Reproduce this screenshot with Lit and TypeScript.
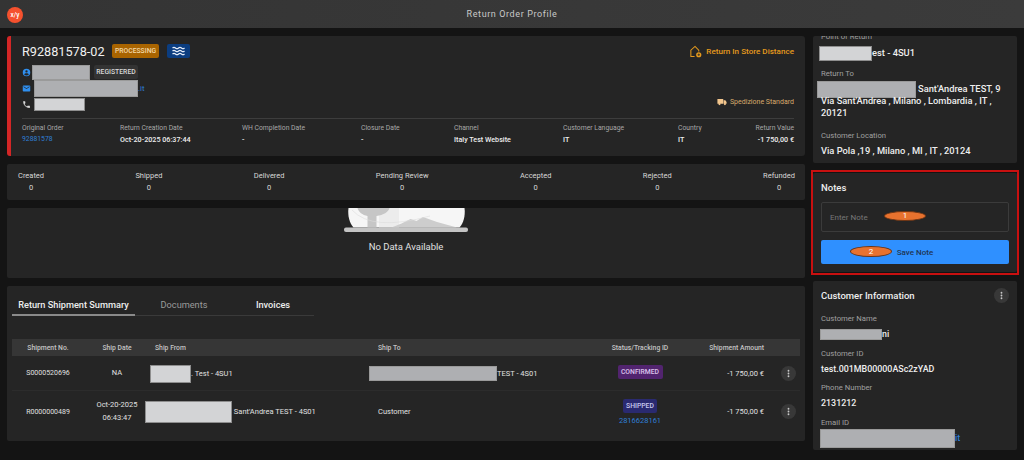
import { LitElement, html, css, svg } from "lit";
import { customElement } from "lit/decorators.js";

const more = html`<svg viewBox="0 0 24 24" width="11" height="11" fill="#c8c8c8">
  <path d="M12 8a2 2 0 1 0 0-4 2 2 0 0 0 0 4zm0 2a2 2 0 1 0 0 4 2 2 0 0 0 0-4zm0 6a2 2 0 1 0 0 4 2 2 0 0 0 0-4z" />
</svg>`;

const person = svg`<path d="M12 2a10 10 0 1 0 0 20 10 10 0 0 0 0-20zm0 4a3 3 0 1 1 0 6.2A3 3 0 0 1 12 6zm0 14a8 8 0 0 1-6.4-3.2c.1-2 4.2-3.1 6.4-3.1s6.3 1.1 6.4 3.1A8 8 0 0 1 12 20z" />`;
const mail = svg`<path d="M20 4H4a2 2 0 0 0-2 2v12c0 1.1.9 2 2 2h16a2 2 0 0 0 2-2V6a2 2 0 0 0-2-2zm0 4-8 5-8-5V6l8 5 8-5z" />`;
const phone = svg`<path d="M6.6 10.8a15 15 0 0 0 6.6 6.6l2.2-2.2c.3-.3.7-.4 1-.2 1.1.4 2.3.6 3.6.6.6 0 1 .4 1 1V20c0 .6-.4 1-1 1A17 17 0 0 1 3 4c0-.6.4-1 1-1h3.5c.6 0 1 .4 1 1 0 1.3.2 2.5.6 3.6.1.3 0 .7-.2 1z" />`;

const rows = [
  {
    no: "S0000520696",
    date: html`NA`,
    from: html`<span class="redact from1"></span>. Test - 4SU1`,
    to: html`<span class="redact to1"></span>TEST - 4S01`,
    status: html`<span class="badge confirmed">CONFIRMED</span>`,
    tall: false,
  },
  {
    no: "R0000000489",
    date: html`Oct-20-2025<br />06:43:47`,
    from: html`<span class="redact from2"></span> Sant'Andrea TEST - 4S01`,
    to: html`Customer`,
    status: html`<span class="badge shipped">SHIPPED</span><a class="track">2816628161</a>`,
    tall: true,
  },
];

const summary = [
  ["Original Order", "92881578"],
  ["Return Creation Date", "Oct-20-2025 06:37:44"],
  ["WH Completion Date", "-"],
  ["Closure Date", "-"],
  ["Channel", "Italy Test Website"],
  ["Customer Language", "IT"],
  ["Country", "IT"],
  ["Return Value", "-1 750,00 €"],
];

const counts = ["Created", "Shipped", "Delivered", "Pending Review", "Accepted", "Rejected", "Refunded"];

@customElement("app-root")
class AppRoot extends LitElement {
  static override styles = css`
    :host {
      display: block;
      height: 460px;
      overflow: hidden;
      background: #141414;
      color: #e6e6e6;
      font-family: Roboto, "Open Sans", sans-serif;
      font-size: 8px;
    }

    a {
      color: #2f7fd6;
    }

    .topbar {
      height: 28px;
      display: flex;
      align-items: center;
      justify-content: center;
      position: relative;
      background: linear-gradient(90deg, #343434, #3b3b3b);
      color: #c9c9c9;
      font-size: 9px;
      letter-spacing: 0.6px;
    }

    .logo {
      position: absolute;
      left: 7px;
      top: 7px;
      width: 16px;
      height: 16px;
      border-radius: 50%;
      background: #f5512e;
      color: #fff;
      font-size: 6.5px;
      font-weight: 500;
      letter-spacing: 0;
      display: flex;
      align-items: center;
      justify-content: center;
    }

    .page {
      display: grid;
      grid-template-columns: 798px 204px;
      gap: 8px;
      padding: 8px 7px 0;
      height: 424px;
      overflow: hidden;
    }

    .left,
    .right {
      display: flex;
      flex-direction: column;
      min-height: 0;
    }

    .left {
      gap: 8px;
    }

    .card {
      background: #252525;
      border-radius: 2px;
    }

    /* order header */
    .order {
      height: 120px;
      box-sizing: border-box;
      border-left: 4px solid #d32626;
      border-radius: 3px;
      padding: 7px 11px 0 11px;
      display: flex;
      flex-direction: column;
    }

    .order-top {
      display: flex;
      justify-content: space-between;
    }

    .title-row {
      display: flex;
      align-items: center;
      height: 16px;
      margin-bottom: 5px;
    }

    .title {
      font-size: 12.7px;
      color: #f0f0f0;
      width: 90px;
    }

    .badge {
      display: inline-flex;
      align-items: center;
      justify-content: center;
      height: 14px;
      border-radius: 2px;
      font-size: 6.8px;
      font-weight: 500;
    }

    .processing {
      width: 47px;
      background: #a96400;
      color: #f3d9a8;
    }

    .wave {
      width: 23px;
      margin-left: 8px;
      background: #0b3d80;
    }

    .contact {
      display: flex;
      align-items: center;
      height: 16px;
    }

    .contact svg {
      width: 9px;
      height: 9px;
      flex: none;
    }

    .registered {
      margin-left: 4px;
      width: 44px;
      height: 14px;
      background: #333;
      color: #d8d8d8;
    }

    .store {
      display: flex;
      align-items: center;
      gap: 4px;
      height: 16px;
      color: #e59a1d;
      font-size: 8.1px;
      font-weight: 500;
    }

    .ship-method {
      display: flex;
      justify-content: flex-end;
      align-items: center;
      gap: 3px;
      color: #d9ab6c;
      margin-top: -16px;
      height: 12px;
      font-size: 7px;
    }

    .summary {
      margin-top: 10px;
      border-top: 1px solid #3d3d3d;
      padding-top: 5px;
      display: grid;
      grid-template-columns: 98px 122px 119px 93px 109px 115px 1fr 56px;
      color: #a8a8a8;
      font-size: 6.8px;
    }

    .summary div {
      display: flex;
      flex-direction: column;
      gap: 3px;
    }

    .summary div:last-child {
      text-align: right;
    }

    .summary b {
      color: #eee;
      font-weight: 500;
      font-size: 7.2px;
    }

    /* counters */
    .counts {
      height: 36px;
      box-sizing: border-box;
      padding: 7px 10px 0 11px;
      display: flex;
      justify-content: space-between;
      font-size: 7.5px;
      color: #d8d8d8;
    }

    .counts div {
      display: flex;
      flex-direction: column;
      align-items: center;
      gap: 3px;
    }

    /* empty state */
    .empty {
      height: 70px;
      display: flex;
      flex-direction: column;
      align-items: center;
      color: #e0e0e0;
      font-size: 9.5px;
    }

    .empty svg {
      display: block;
      margin-bottom: 9px;
    }

    /* tabs + table */
    .shipments {
      height: 155px;
      box-sizing: border-box;
      padding: 10px 5px 0;
    }

    .tabs {
      width: 302px;
      height: 19px;
      display: flex;
      border-bottom: 1px solid #3a3a3a;
      font-size: 9.2px;
      font-weight: 500;
    }

    .tab {
      box-sizing: border-box;
      height: 20px;
      padding-top: 3px;
      text-align: center;
    }

    .tab.active {
      width: 123px;
      border-bottom: 2px solid #8a8a8a;
      color: #eee;
    }

    .tab.docs {
      width: 98px;
      color: #9a9a9a;
      font-weight: 400;
    }

    .tab.inv {
      width: 80px;
      color: #eee;
    }

    .row {
      display: grid;
      grid-template-columns: 72px 66px 223px 237px 60px 106px 24px;
      align-items: center;
      text-align: center;
      font-size: 7.5px;
      color: #e0e0e0;
    }

    .table {
      margin-top: 23px;
      width: 788px;
    }

    .head {
      height: 17px;
      background: #363636;
      color: #c4c4c4;
      font-size: 6.8px;
      font-weight: 500;
    }

    .body-row {
      height: 34px;
      border-bottom: 1px solid #2c2c2c;
    }

    .body-row.tall {
      height: 41px;
      border-bottom: 0;
    }

    .ship-no {
      font-size: 7px;
    }

    .lft {
      text-align: left;
      padding-left: 5px;
      white-space: nowrap;
    }

    .rgt {
      text-align: right;
      padding-right: 12px;
    }

    .stacked {
      display: flex;
      flex-direction: column;
      align-items: center;
      gap: 3px;
      white-space: nowrap;
    }

    .date {
      line-height: 12.5px;
    }

    .confirmed {
      width: 45px;
      background: #52246f;
      color: #dcc5ec;
      margin-top: -3px;
    }

    .shipped {
      width: 34px;
      background: #2a2a70;
      color: #c9c9ee;
    }

    .dots {
      width: 15px;
      height: 15px;
      border-radius: 50%;
      background: #383838;
      display: flex;
      align-items: center;
      justify-content: center;
    }

    .row .dots {
      margin: 0 auto;
    }

    /* right column */
    .location {
      height: 127px;
      flex: none;
      box-sizing: border-box;
      overflow: hidden;
      padding: 0 8px;
    }

    .field {
      color: #a0a0a0;
      font-size: 7.7px;
      line-height: 10px;
    }

    .value {
      color: #eee;
      font-size: 9.3px;
      font-weight: 500;
      line-height: 12px;
    }

    .location .field:first-child {
      margin-top: -4px;
    }

    .location .value {
      margin-top: 5px;
    }

    .location .field {
      margin-top: 10px;
    }

    .location .ret-value {
      margin-top: 4px;
    }

    .location .field.last {
      margin-top: 12px;
    }

    .location .value.last {
      margin-top: 4px;
    }

    .notes-frame {
      margin: 7px -2px 0;
      border: 2px solid #c81010;
      height: 105px;
      box-sizing: border-box;
      padding: 1px 0;
      flex: none;
    }

    .notes {
      height: 99px;
      box-sizing: border-box;
      padding: 8px;
      position: relative;
    }

    .notes h3 {
      margin: 0 0 8px;
      font-size: 9.5px;
      line-height: 13px;
      font-weight: 500;
      color: #eee;
    }

    .note-input {
      box-sizing: border-box;
      height: 30px;
      border: 1px solid #3b3b3b;
      border-radius: 2px;
      display: flex;
      align-items: center;
      padding-left: 8px;
      color: #777;
      font-size: 8px;
    }

    .save {
      margin-top: 8px;
      height: 24px;
      border-radius: 2px;
      background: #2f90ff;
      color: #1f3654;
      font-size: 8px;
      font-weight: 500;
      display: flex;
      align-items: center;
      justify-content: center;
    }

    .oval {
      position: absolute;
      box-sizing: border-box;
      border: 1px solid #6e3514;
      border-radius: 50%;
      background: #e8722e;
      color: #fff;
      font-size: 8px;
      line-height: 8px;
      display: flex;
      align-items: center;
      justify-content: center;
    }

    .oval.one {
      left: 71px;
      top: 38px;
      width: 42px;
      height: 10px;
    }

    .oval.two {
      left: 37px;
      top: 73px;
      width: 42px;
      height: 11px;
    }

    .customer {
      margin-top: 6px;
      height: 169px;
      flex: none;
      box-sizing: border-box;
      padding: 7px 8px 0;
    }

    .customer-head {
      display: flex;
      justify-content: space-between;
      align-items: center;
      height: 15px;
      font-size: 9.5px;
      font-weight: 500;
      color: #eee;
      margin-bottom: 11px;
    }

    .customer .value {
      font-size: 8.9px;
      margin-top: 4px;
      margin-bottom: 8.5px;
    }

    /* grey boxes covering personal data in the screenshot */
    .redact {
      display: inline-block;
      box-sizing: border-box;
      vertical-align: middle;
      background: #aeafb2;
      border: 1px solid #9a9a9a;
      margin: -10px 0;
    }

    .redact.pale {
      background: #d3d4d6;
      border-color: #8e8e8e;
    }

    .name {
      width: 58px;
      height: 15px;
      margin-left: 1px;
    }

    .email {
      width: 104px;
      height: 17px;
      margin-left: 3px;
    }

    .tel {
      width: 51px;
      height: 13px;
      margin-left: 3px;
    }

    .from1 {
      width: 41px;
      height: 18px;
      margin-left: -5px;
      background: #d3d4d6;
      border-color: #8e8e8e;
    }

    .from2 {
      width: 87px;
      height: 22px;
      margin-left: -10px;
      background: #d3d4d6;
      border-color: #8e8e8e;
    }

    .to1 {
      width: 128px;
      height: 15px;
      margin-left: -9px;
    }

    .point {
      width: 53px;
      height: 15px;
      margin-left: -2px;
    }

    .ret {
      width: 99px;
      height: 17px;
      margin-left: -4px;
      margin-right: 2px;
    }

    .cname {
      width: 62px;
      height: 11px;
      margin-left: -1px;
    }

    .cmail {
      width: 135px;
      height: 19px;
      margin-left: -1px;
    }
  `;

  override render() {
    return html`
      <div class="topbar">
        <div class="logo">x/y</div>
        Return Order Profile
      </div>
      <div class="page">
        <div class="left">
          <section class="card order">
            <div class="order-top">
              <div>
                <div class="title-row">
                  <span class="title">R92881578-02</span>
                  <span class="badge processing">PROCESSING</span>
                  <span class="badge wave">
                    <svg viewBox="0 0 23 14" width="23" height="14" fill="none" stroke="#e6eefa" stroke-width="1.2">
                      <path d="M5.5 4q1.5-1.4 3 0t3 0 3 0 3 0M5.5 7q1.5-1.4 3 0t3 0 3 0 3 0M5.5 10q1.5-1.4 3 0t3 0 3 0 3 0" />
                    </svg>
                  </span>
                </div>
                <div class="contact">
                  <svg viewBox="0 0 24 24" fill="#2f8fef">${person}</svg>
                  <span class="redact name"></span>
                  <span class="badge registered">REGISTERED</span>
                </div>
                <div class="contact">
                  <svg viewBox="0 0 24 24" fill="#2f8fef">${mail}</svg>
                  <span class="redact email"></span>
                  <a>.it</a>
                </div>
                <div class="contact">
                  <svg viewBox="0 0 24 24" fill="#ddd">${phone}</svg>
                  <span class="redact pale tel"></span>
                </div>
              </div>
              <div class="store">
                <svg viewBox="0 0 14 14" width="13" height="13" fill="none" stroke="#e59a1d" stroke-width="1.1">
                  <path d="M6 12.5H2V5.500L6.500 1.500l4 4v1.500" />
                  <circle cx="10.5" cy="10.5" r="2.8" fill="#e59a1d" stroke="none" />
                  <path d="M9.2 10.5h2.600M10.5 9.200v2.600" stroke="#252525" stroke-width=".8" />
                </svg>
                Return In Store Distance
              </div>
            </div>
            <div class="ship-method">
              <svg viewBox="0 0 24 16" width="10" height="8" fill="#f3c68d">
                <path d="M1 1h14v11H1zM16 4h4l3 4v4h-7z" />
                <circle cx="6" cy="13" r="2.5" />
                <circle cx="19" cy="13" r="2.5" />
              </svg>
              Spedizione Standard
            </div>
            <div class="summary">
              ${summary.map(
                ([label, value], i) => html`<div>
                  <span>${label}</span>
                  ${i === 0 ? html`<a>${value}</a>` : html`<b>${value}</b>`}
                </div>`,
              )}
            </div>
          </section>

          <section class="card counts">
            ${counts.map((c) => html`<div><span>${c}</span><span>0</span></div>`)}
          </section>

          <section class="card empty">
            <svg viewBox="0 0 124 24" width="124" height="24">
              <path d="M4.5 0h116c1 8-1 15-5 19.500H9.500C5.500 15 3.500 8 4.500 0z" fill="#f6f6f6" />
              <path d="M35 0h20v19.500H35z" fill="#ececec" />
              <path d="M13.5 0h32c-1 4-6 7-13 8v11.500h-9V8c-5-1-9-4-10-8z" fill="#c6c6c6" />
              <path d="M47.5 19.500l10-4 9-4.500 6 2 6.500-4 14 5 20 5.500z" fill="#cdcdcd" />
              <path d="M8 2q20 22 78 6" fill="none" stroke="#dcdcdc" stroke-width=".6" />
              <rect x="0" y="19.5" width="124" height="4.5" rx="2" fill="#c4c4c4" />
            </svg>
            No Data Available
          </section>

          <section class="card shipments">
            <div class="tabs">
              <div class="tab active">Return Shipment Summary</div>
              <div class="tab docs">Documents</div>
              <div class="tab inv">Invoices</div>
            </div>
            <div class="table">
              <div class="row head">
                <span>Shipment No.</span>
                <span>Ship Date</span>
                <span class="lft">Ship From</span>
                <span class="lft">Ship To</span>
                <span>Status/Tracking ID</span>
                <span class="rgt">Shipment Amount</span>
                <span></span>
              </div>
              ${rows.map(
                (r) => html`<div class="row body-row ${r.tall ? "tall" : ""}">
                  <span class="ship-no">${r.no}</span>
                  <span class="date">${r.date}</span>
                  <span class="lft">${r.from}</span>
                  <span class="lft">${r.to}</span>
                  <span class="stacked">${r.status}</span>
                  <span class="rgt">-1 750,00 €</span>
                  <span class="dots">${more}</span>
                </div>`,
              )}
            </div>
          </section>
        </div>

        <div class="right">
          <section class="card location">
            <div class="field">Point of Return</div>
            <div class="value"><span class="redact pale point"></span>est - 4SU1</div>
            <div class="field">Return To</div>
            <div class="value ret-value">
              <span class="redact ret"></span>Sant'Andrea TEST, 9<br />Via Sant'Andrea , Milano , Lombardia , IT ,<br />20121
            </div>
            <div class="field last">Customer Location</div>
            <div class="value last">Via Pola ,19 , Milano , MI , IT , 20124</div>
          </section>

          <div class="notes-frame">
            <section class="card notes">
              <h3>Notes</h3>
              <div class="note-input">Enter Note</div>
              <div class="save">Save Note</div>
              <span class="oval one">1</span>
              <span class="oval two">2</span>
            </section>
          </div>

          <section class="card customer">
            <div class="customer-head">Customer Information <span class="dots">${more}</span></div>
            <div class="field">Customer Name</div>
            <div class="value"><span class="redact cname"></span>ni</div>
            <div class="field">Customer ID</div>
            <div class="value">test.001MB00000ASc2zYAD</div>
            <div class="field">Phone Number</div>
            <div class="value">2131212</div>
            <div class="field">Email ID</div>
            <div class="value"><span class="redact cmail"></span><a>it</a></div>
          </section>
        </div>
      </div>
    `;
  }
}

void AppRoot;
